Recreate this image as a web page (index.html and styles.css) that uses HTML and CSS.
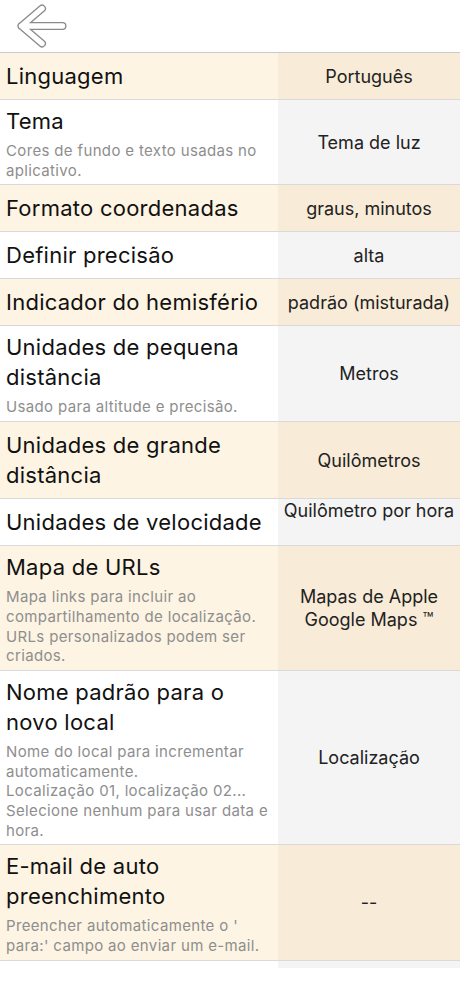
FILE: index.html
```html
<!DOCTYPE html>
<html lang="pt">
<head>
    <meta charset="UTF-8">
    <meta name="viewport" content="width=device-width, initial-scale=1.0">
    <title>Configurações</title>
    <link rel="stylesheet" href="styles.css">
</head>
<body>
    <header class="topbar">
        <button class="back" aria-label="Voltar">
            <svg width="70" height="52" viewBox="0 0 70 52">
                <path d="M42 8.5 L21.5 26 L42 43.5 M21.5 26 H62.5" fill="none" stroke="#8a8a8a" stroke-width="8" stroke-linecap="round" stroke-linejoin="round"/>
                <path d="M42 8.5 L21.5 26 L42 43.5 M21.5 26 H62.5" fill="none" stroke="#fff" stroke-width="5.4" stroke-linecap="round" stroke-linejoin="round"/>
            </svg>
        </button>
    </header>

    <div class="settings">
        <div class="row tint plain">
            <div class="label"><div class="title">Linguagem</div></div>
            <div class="value">Português</div>
        </div>
        <div class="row">
            <div class="label">
                <div class="title">Tema</div>
                <div class="desc">Cores de fundo e texto usadas no aplicativo.</div>
            </div>
            <div class="value">Tema de luz</div>
        </div>
        <div class="row tint plain">
            <div class="label"><div class="title">Formato coordenadas</div></div>
            <div class="value">graus, minutos</div>
        </div>
        <div class="row plain">
            <div class="label"><div class="title">Definir precisão</div></div>
            <div class="value">alta</div>
        </div>
        <div class="row tint plain">
            <div class="label"><div class="title">Indicador do hemisfério</div></div>
            <div class="value">padrão (misturada)</div>
        </div>
        <div class="row">
            <div class="label">
                <div class="title">Unidades de pequena distância</div>
                <div class="desc">Usado para altitude e precisão.</div>
            </div>
            <div class="value">Metros</div>
        </div>
        <div class="row tint plain">
            <div class="label"><div class="title">Unidades de grande distância</div></div>
            <div class="value">Quilômetros</div>
        </div>
        <div class="row plain">
            <div class="label"><div class="title">Unidades de velocidade</div></div>
            <div class="value top">Quilômetro por hora</div>
        </div>
        <div class="row tint">
            <div class="label">
                <div class="title">Mapa de URLs</div>
                <div class="desc">Mapa links para incluir ao compartilhamento de localização. URLs personalizados podem ser criados.</div>
            </div>
            <div class="value">Mapas de Apple<br>Google Maps ™</div>
        </div>
        <div class="row">
            <div class="label">
                <div class="title">Nome padrão para o novo local</div>
                <div class="desc">Nome do local para incrementar automaticamente.<br>Localização 01, localização 02...<br>Selecione nenhum para usar data e hora.</div>
            </div>
            <div class="value">Localização</div>
        </div>
        <div class="row tint">
            <div class="label">
                <div class="title">E-mail de auto preenchimento</div>
                <div class="desc">Preencher automaticamente o ' para:' campo ao enviar um e-mail.</div>
            </div>
            <div class="value">--</div>
        </div>
        <div class="row filler">
            <div class="label"></div>
            <div class="value"></div>
        </div>
    </div>
</body>
</html>
```

FILE: styles.css
```css
body {
    font-family: Inter, "Noto Sans", sans-serif;
    margin: 0;
    background-color: #fff;
    color: #111;
}
.topbar {
    height: 52px;
    border-bottom: 1px solid #cacaca;
}
.back {
    display: block;
    padding: 0;
    border: none;
    background: none;
    cursor: pointer;
}
.back svg {
    display: block;
}
.row {
    display: grid;
    grid-template-columns: 278px 1fr;
    border-bottom: 1px solid #d9d9d9;
}
.label {
    display: flex;
    flex-direction: column;
    justify-content: center;
    padding: 6px 6px 4px;
    background-color: #fff;
}
.plain .label {
    padding: 8px 6px;
}
.title {
    font-size: 22px;
    line-height: 30px;
    letter-spacing: 0.25px;
}
.desc {
    margin-top: 5px;
    font-size: 15px;
    line-height: 19.7px;
    letter-spacing: 0.35px;
    color: #8e8e8e;
}
.value {
    display: flex;
    align-items: center;
    justify-content: center;
    text-align: center;
    font-size: 18px;
    line-height: 23px;
    color: #222;
    background-color: #f4f4f4;
}
.value.top {
    align-items: flex-start;
}
.tint .label {
    background-color: #fdf4e3;
}
.tint .value {
    background-color: #f8ebd7;
}
.filler {
    height: 7px;
    border-bottom: none;
}
.filler .label {
    padding: 0;
}
```
